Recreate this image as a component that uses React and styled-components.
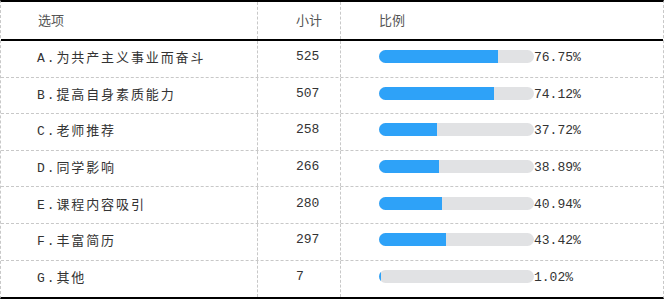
import React from 'react'
import styled, { createGlobalStyle } from 'styled-components'

const Global = createGlobalStyle`
  body {
    margin: 0;
    background: #fff;
    font-family: "Liberation Mono", "Noto Sans CJK SC", monospace;
    font-size: 13px;
    color: #333;
  }
`

const Table = styled.div`
  width: 664px;
  border-top: 2px solid #000;
  border-bottom: 2px solid #000;
  border-left: 1px dashed #c8c8c8;
  border-right: 1px dashed #c8c8c8;
  box-sizing: border-box;
`

const Row = styled.div`
  display: grid;
  grid-template-columns: 256px 83px 1fr;
  height: ${(p) => (p.$head ? '37px' : '36.6px')};
  border-bottom: ${(p) => (p.$head ? '2px solid #000' : p.$last ? 'none' : '1px dashed #c8c8c8')};
  box-sizing: ${(p) => (p.$head ? 'content-box' : 'border-box')};
`

const Cell = styled.div`
  display: flex;
  align-items: center;
  padding-left: ${(p) => p.$pad || 37}px;
  padding-bottom: ${(p) => (p.$head ? 3 : 4)}px;
  border-left: ${(p) => (p.$first ? 'none' : '1px dashed #c8c8c8')};
  color: ${(p) => (p.$head ? '#555' : '#333')};
  letter-spacing: ${(p) => (p.$spaced ? '1.9px' : '0')};
  white-space: nowrap;
`

const Track = styled.div`
  width: 155px;
  height: 13px;
  border-radius: 7px;
  background: #e1e2e4;
  overflow: hidden;
`

const Fill = styled.div`
  height: 100%;
  background: #2ea2f8;
`

const Pct = styled.span`
  margin-top: 2px;
`

const rows = [
  ['A.为共产主义事业而奋斗', 525, 76.75],
  ['B.提高自身素质能力', 507, 74.12],
  ['C.老师推荐', 258, 37.72],
  ['D.同学影响', 266, 38.89],
  ['E.课程内容吸引', 280, 40.94],
  ['F.丰富简历', 297, 43.42],
  ['G.其他', 7, 1.02],
]

export default function App() {
  return (
    <>
      <Global />
      <Table>
        <Row $head>
          <Cell $first $head $pad={37}>选项</Cell>
          <Cell $head $pad={38}>小计</Cell>
          <Cell $head $pad={38}>比例</Cell>
        </Row>
        {rows.map(([label, count, pct], i) => (
          <Row key={label} $last={i === rows.length - 1}>
            <Cell $first $spaced $pad={36}>{label}</Cell>
            <Cell $pad={38}>{count}</Cell>
            <Cell $pad={38}>
              <Track>
                <Fill style={{ width: `${pct}%` }} />
              </Track>
              <Pct>{pct.toFixed(2)}%</Pct>
            </Cell>
          </Row>
        ))}
      </Table>
    </>
  )
}
